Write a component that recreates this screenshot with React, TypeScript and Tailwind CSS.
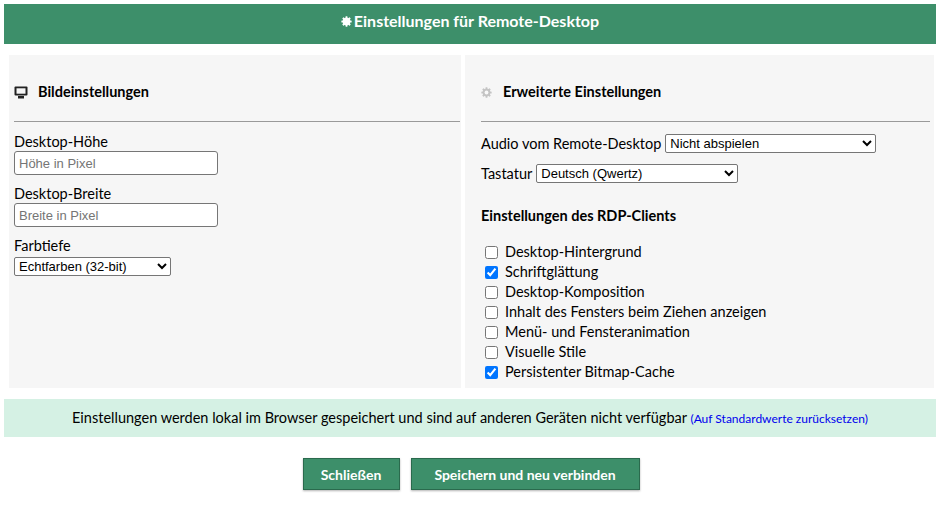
import React from "react";

const checks: [string, boolean][] = [
  ["Desktop-Hintergrund", false],
  ["Schriftglättung", true],
  ["Desktop-Komposition", false],
  ["Inhalt des Fensters beim Ziehen anzeigen", false],
  ["Menü- und Fensteranimation", false],
  ["Visuelle Stile", false],
  ["Persistenter Bitmap-Cache", true],
];

function Gear({ c, s }: { c: string; s: number }) {
  return (
    <svg width={s} height={s} viewBox="0 0 16 16">
      <g fill={c}>
        {[0, 45, 90, 135].map((a) => (
          <rect key={a} x="6.5" y="0.5" width="3" height="15" rx="0.8" transform={`rotate(${a} 8 8)`} />
        ))}
        <circle cx="8" cy="8" r="5.5" />
      </g>
      <circle cx="8" cy="8" r="2.8" fill="#fff" opacity="0.9" />
    </svg>
  );
}

export default function App() {
  return (
    <div className="w-[940px] h-[505px] bg-white text-[14.5px] text-black" style={{ fontFamily: "Lato, 'Open Sans', sans-serif" }}>
      <div className="mx-[4px] pt-[4px]">
        <div className="h-[40px] bg-[#3d8f6a] flex justify-center items-start pt-[4px] text-white font-bold text-[16px]">
          <span className="flex items-center gap-[2px] mt-[1px]"><Gear c="#fff" s={11} />Einstellungen für Remote-Desktop</span>
        </div>
      </div>
      <div className="flex gap-[4px] pl-[9px] pr-[6px] mt-[11px] h-[333px]">
        <div className="w-[452px] bg-[#f6f6f6] px-[5px]">
          <div className="flex items-center gap-[10px] pt-[26px] pb-[18px] h-[66px] font-bold">
            <svg width="14" height="13" viewBox="0 0 14 13"><rect x="0.5" y="0.5" width="13" height="9" rx="1" fill="#222" /><rect x="2.5" y="2.3" width="9" height="5.4" fill="#f6f6f6" /><rect x="4" y="10" width="6" height="2.5" fill="#222" /></svg>
            <span>Bildeinstellungen</span>
          </div>
          <div className="border-t border-[#9a9a9a] mr-[-4px]" />
          <div className="mt-[11px] leading-[18px]">Desktop-Höhe</div>
          <input placeholder="Höhe in Pixel" className="w-[204px] h-[24px] border border-[#767676] rounded-[3px] bg-white px-[4px] text-[13px] placeholder-[#757575]" style={{ fontFamily: "Arial, 'Liberation Sans', sans-serif" }} />
          <div className="mt-[10px] leading-[18px]">Desktop-Breite</div>
          <input placeholder="Breite in Pixel" className="w-[204px] h-[24px] border border-[#767676] rounded-[3px] bg-white px-[4px] text-[13px] placeholder-[#757575]" style={{ fontFamily: "Arial, 'Liberation Sans', sans-serif" }} />
          <div className="mt-[10px] leading-[18px]">Farbtiefe</div>
          <select className="w-[157px] h-[19px] border border-[#767676] rounded-[2px] bg-white text-[13px]" style={{ fontFamily: "Arial, 'Liberation Sans', sans-serif" }}>
            <option>Echtfarben (32-bit)</option>
          </select>
        </div>
        <div className="flex-1 bg-[#f6f6f6] px-[16px]">
          <div className="flex items-center gap-[11px] pt-[26px] pb-[18px] h-[66px] font-bold">
            <Gear c="#c4c4c4" s={11} />
            <span>Erweiterte Einstellungen</span>
          </div>
          <div className="border-t border-[#9a9a9a] mr-[-12px]" />
          <div className="mt-[12px] flex items-center gap-[4px] leading-[18px]">
            <span>Audio vom Remote-Desktop</span>
            <select className="w-[211px] h-[19px] border border-[#767676] rounded-[2px] bg-white text-[13px]" style={{ fontFamily: "Arial, 'Liberation Sans', sans-serif" }}><option>Nicht abspielen</option></select>
          </div>
          <div className="mt-[11px] flex items-center gap-[4px] leading-[18px]">
            <span>Tastatur</span>
            <select className="w-[202px] h-[19px] border border-[#767676] rounded-[2px] bg-white text-[13px]" style={{ fontFamily: "Arial, 'Liberation Sans', sans-serif" }}><option>Deutsch (Qwertz)</option></select>
          </div>
          <div className="mt-[24px] font-bold leading-[18px]">Einstellungen des RDP-Clients</div>
          <div className="mt-[17px] flex flex-col">
            {checks.map(([l, c]) => (
              <label key={l} className="flex items-center gap-[7px] h-[20px] pl-[4px]">
                <input type="checkbox" defaultChecked={c} className="w-[13px] h-[13px] accent-[#0075ff]" />
                <span>{l}</span>
              </label>
            ))}
          </div>
        </div>
      </div>
      <div className="mx-[4px] mt-[11px] h-[38px] bg-[#d5f1e4] flex items-center justify-center">
        <span>Einstellungen werden lokal im Browser gespeichert und sind auf anderen Geräten nicht verfügbar <span className="text-[12px] text-[#0000ee]">(Auf Standardwerte zurücksetzen)</span></span>
      </div>
      <div className="flex justify-center gap-[11px] mt-[21px] pl-[2px]">
        <button className="h-[32px] w-[97px] bg-[#3d8f6a] border border-[#2a6a4d] text-white font-bold text-[14px] shadow-[0_1px_2px_rgba(0,0,0,0.3)]">Schließen</button>
        <button className="h-[32px] w-[229px] bg-[#3d8f6a] border border-[#2a6a4d] text-white font-bold text-[14px] shadow-[0_1px_2px_rgba(0,0,0,0.3)]">Speichern und neu verbinden</button>
      </div>
    </div>
  );
}
